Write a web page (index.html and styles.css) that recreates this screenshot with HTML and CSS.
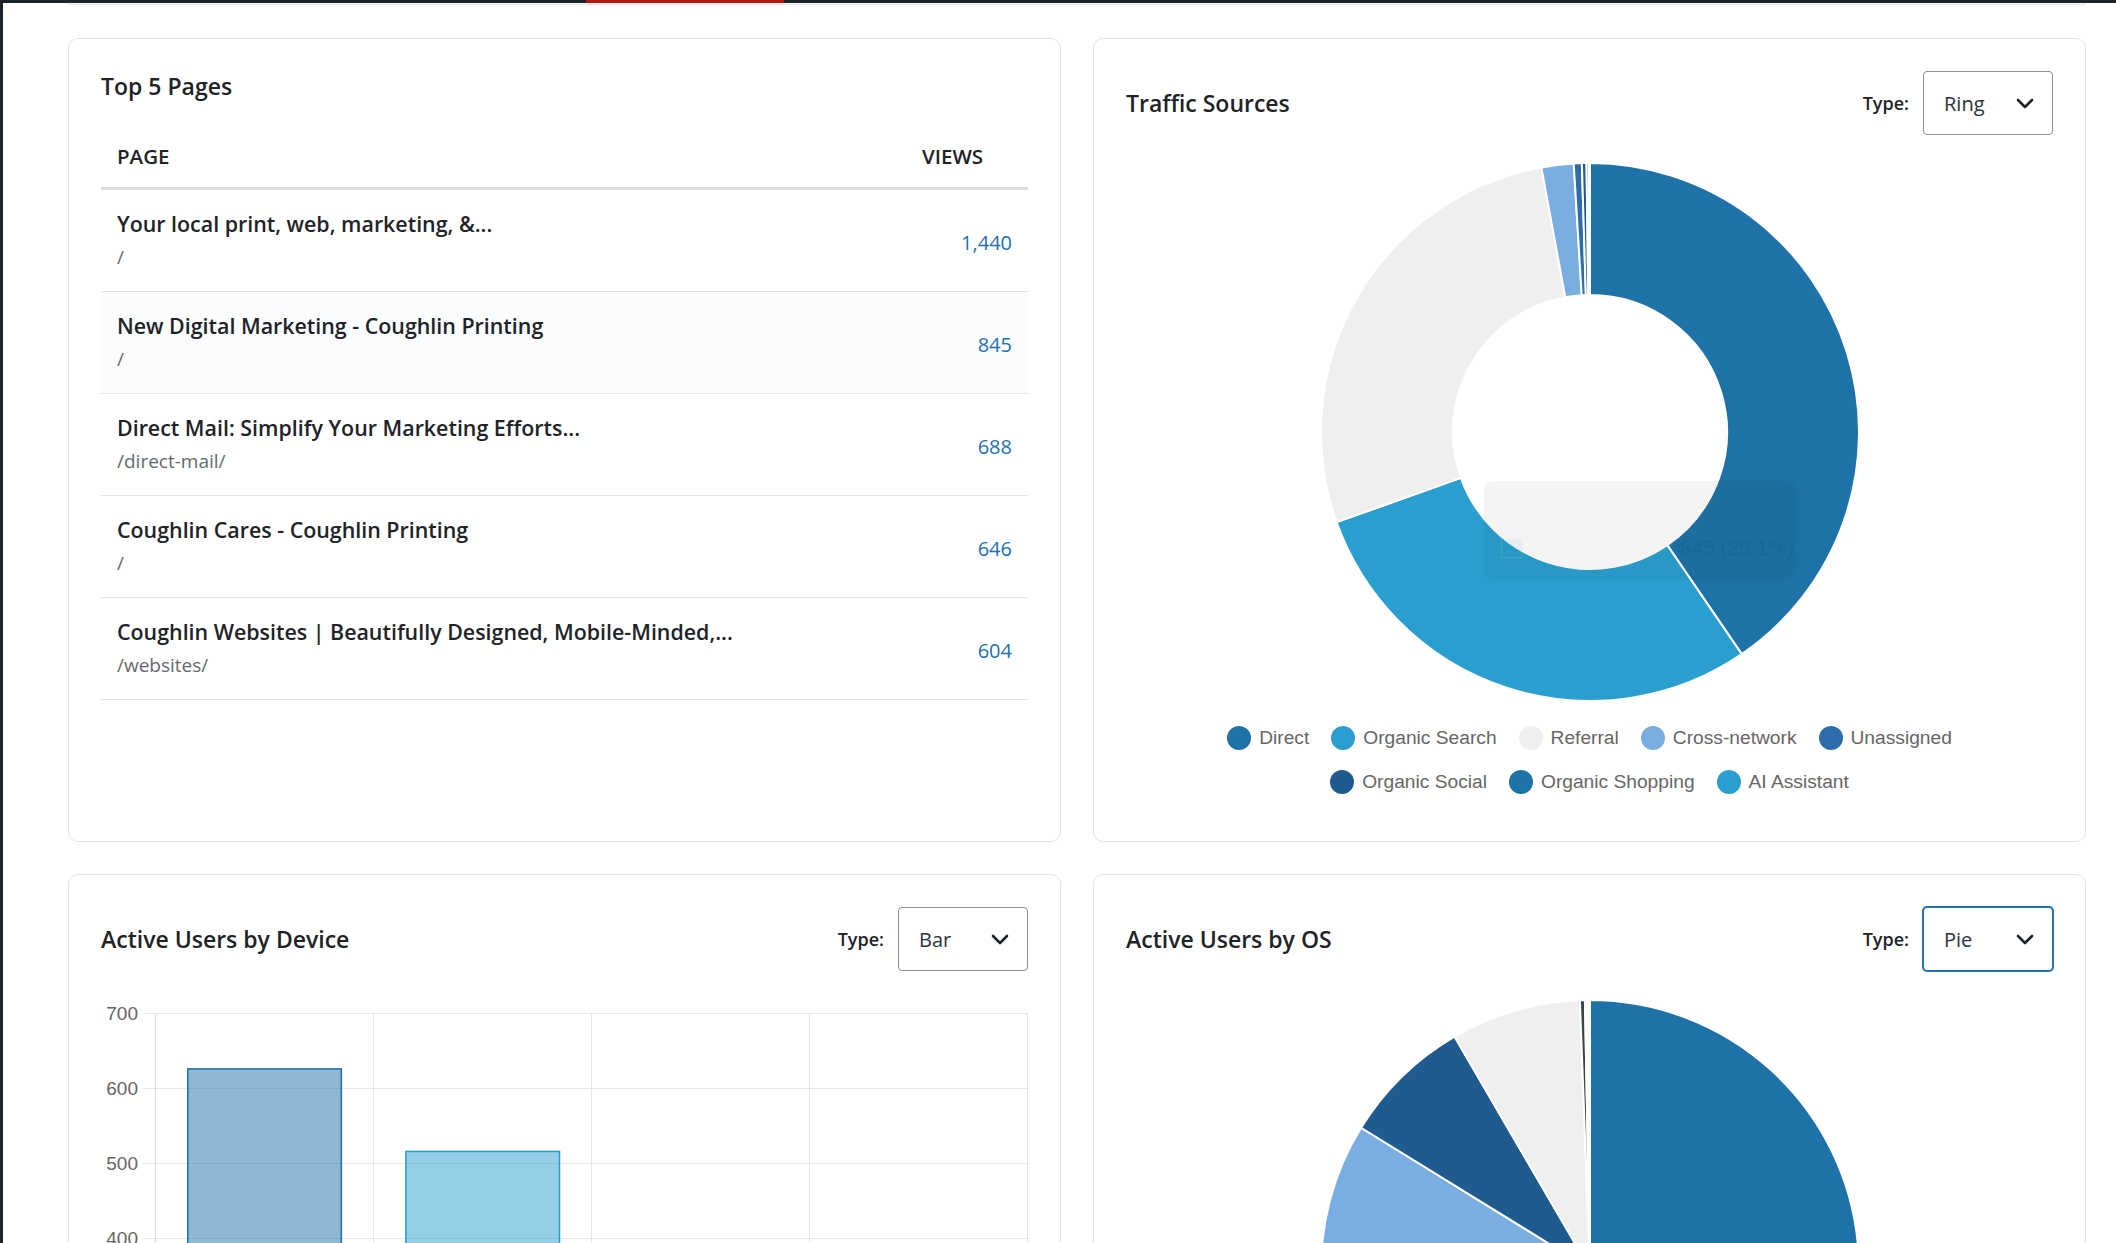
FILE: index.html
```html
<!DOCTYPE html>
<html lang="en">
<head>
<meta charset="utf-8">
<title>Site Analytics</title>
<link rel="stylesheet" href="styles.css">
</head>
<body>
<div class="adminbar"><span class="adminbar-current"></span></div>

<main class="content">
  <div class="panel-tail"></div>

  <div class="dash-grid">
    <!-- Top pages table -->
    <section class="card">
      <h3 class="card-title">Top 5 Pages</h3>
      <table class="pages">
        <thead>
          <tr><th>Page</th><th class="col-views">Views</th></tr>
        </thead>
        <tbody>
          <tr>
            <td><div class="page-title">Your local print, web, marketing, &amp;...</div><div class="page-path">/</div></td>
            <td class="views">1,440</td>
          </tr>
          <tr class="is-hovered">
            <td><div class="page-title">New Digital Marketing - Coughlin Printing</div><div class="page-path">/</div></td>
            <td class="views">845</td>
          </tr>
          <tr>
            <td><div class="page-title">Direct Mail: Simplify Your Marketing Efforts...</div><div class="page-path">/direct-mail/</div></td>
            <td class="views">688</td>
          </tr>
          <tr>
            <td><div class="page-title">Coughlin Cares - Coughlin Printing</div><div class="page-path">/</div></td>
            <td class="views">646</td>
          </tr>
          <tr>
            <td><div class="page-title">Coughlin Websites | Beautifully Designed, Mobile-Minded,...</div><div class="page-path">/websites/</div></td>
            <td class="views">604</td>
          </tr>
        </tbody>
      </table>
    </section>

    <!-- Traffic sources ring chart -->
    <section class="card">
      <header class="card-head">
        <h3 class="card-title">Traffic Sources</h3>
        <div class="type-picker">
          <span class="type-label">Type:</span>
          <div class="select">
            <span>Ring</span>
            <svg class="chevron" width="18" height="11" viewBox="0 0 18 11"><polyline points="2,2 9,9 16,2" fill="none" stroke="#1d2327" stroke-width="2.6" stroke-linecap="round" stroke-linejoin="round"/></svg>
          </div>
        </div>
      </header>
      <div class="chart">
        <svg id="traffic-chart" class="chart-svg" width="927" height="575" viewBox="0 0 927 575"></svg>
        <div class="chart-tooltip">
          <span class="tip-swatch"></span><span class="tip-label">Organic Search: </span><span class="tip-value">845 (29.1%)</span>
        </div>
        <ul id="traffic-legend" class="legend"></ul>
      </div>
    </section>

    <!-- Active users by device bar chart -->
    <section class="card">
      <header class="card-head">
        <h3 class="card-title">Active Users by Device</h3>
        <div class="type-picker">
          <span class="type-label">Type:</span>
          <div class="select">
            <span>Bar</span>
            <svg class="chevron" width="18" height="11" viewBox="0 0 18 11"><polyline points="2,2 9,9 16,2" fill="none" stroke="#1d2327" stroke-width="2.6" stroke-linecap="round" stroke-linejoin="round"/></svg>
          </div>
        </div>
      </header>
      <div class="chart">
        <svg id="device-chart" class="chart-svg" width="927" height="640" viewBox="0 0 927 640"></svg>
      </div>
    </section>

    <!-- Active users by OS pie chart -->
    <section class="card">
      <header class="card-head">
        <h3 class="card-title">Active Users by OS</h3>
        <div class="type-picker">
          <span class="type-label">Type:</span>
          <div class="select is-focused">
            <span>Pie</span>
            <svg class="chevron" width="18" height="11" viewBox="0 0 18 11"><polyline points="2,2 9,9 16,2" fill="none" stroke="#1d2327" stroke-width="2.6" stroke-linecap="round" stroke-linejoin="round"/></svg>
          </div>
        </div>
      </header>
      <div class="chart">
        <svg id="os-chart" class="chart-svg" width="927" height="575" viewBox="0 0 927 575"></svg>
        <ul id="os-legend" class="legend"></ul>
      </div>
    </section>
  </div>
</main>

<script src="app.js"></script>
</body>
</html>
```
FILE: styles.css
```css
* {
  box-sizing: border-box;
}

html,
body {
  height: 100%;
  overflow: hidden;
}

body {
  margin: 0;
  background: #fff;
  border-left: 3px solid #1d2327;
  font-family: "Open Sans", "Noto Sans", sans-serif;
  color: #1d2327;
}

/* thin admin toolbar along the top */
.adminbar {
  display: flex;
  height: 3px;
  background: #1d2327;
}

.adminbar-current {
  width: 198px;
  margin-left: 583px;
  background: #b1190f;
}

.content {
  padding: 0 30px 0 65px;
}

/* bottom edge of the panel above, scrolled out of view */
.panel-tail {
  height: 2px;
  border: 1px solid #e0e2e5;
  border-top: 0;
  border-radius: 0 0 10px 10px;
}

.dash-grid {
  display: grid;
  grid-template-columns: 1fr 1fr;
  gap: 32px;
  margin-top: 33px;
}

.card {
  min-width: 0;
  padding: 32px;
  background: #fff;
  border: 1px solid #e2e4e7;
  border-radius: 10px;
}

.card-title {
  margin: 0;
  font-size: 23px;
  line-height: 31px;
  font-weight: 600;
  color: #1d2327;
}

.card-head {
  display: flex;
  align-items: center;
  justify-content: space-between;
  height: 64px;
}

.type-picker {
  display: flex;
  align-items: center;
  gap: 14px;
}

.type-label {
  font-size: 18px;
  font-weight: 600;
  color: #1d2327;
}

.select {
  display: flex;
  align-items: center;
  justify-content: space-between;
  width: 130px;
  height: 64px;
  padding: 0 18px 0 20px;
  background: #fff;
  border: 1px solid #8c8f94;
  border-radius: 4px;
  font-size: 20px;
  color: #2c3338;
}

.select.is-focused {
  border-color: #2271b1;
  box-shadow: 0 0 0 1px #2271b1;
}

.chevron {
  display: block;
}

/* top pages table */
.pages {
  width: 100%;
  margin-top: 23px;
  border-collapse: collapse;
}

.pages th {
  padding: 16px;
  text-align: left;
  font-size: 20.5px;
  line-height: 30px;
  font-weight: 600;
  text-transform: uppercase;
  color: #1d2327;
  border-bottom: 3px solid #dcdcde;
}

.pages th.col-views {
  width: 122px;
}

.pages td {
  padding: 18px 16px 22px;
  vertical-align: middle;
  border-bottom: 1px solid #e3e4e6;
}

.pages tr.is-hovered td {
  background: #fbfcfe;
}

.page-title {
  font-size: 21.4px;
  line-height: 31px;
  font-weight: 600;
  color: #1d2327;
}

.page-path {
  margin-top: 6px;
  font-size: 19px;
  line-height: 24px;
  color: #646970;
}

.pages td.views {
  padding-top: 22px;
  padding-bottom: 19px;
  text-align: right;
  font-size: 20px;
  color: #2271b1;
}

/* charts */
.chart {
  position: relative;
}

.chart-svg {
  display: block;
}

.chart-svg text {
  font-family: "Liberation Sans", Arial, sans-serif;
  font-size: 19px;
  fill: #666;
}

.legend {
  display: flex;
  flex-wrap: wrap;
  justify-content: center;
  column-gap: 22px;
  max-width: 780px;
  margin: 6px auto 0;
  padding: 0 0 5px;
  list-style: none;
  font-family: "Liberation Sans", Arial, sans-serif;
  font-size: 19.2px;
  color: #666;
}

.legend li {
  display: flex;
  align-items: center;
  gap: 8px;
  height: 44px;
}

.legend .swatch {
  width: 24px;
  height: 24px;
  border-radius: 50%;
}

/* hover tooltip, fading out */
.chart-tooltip {
  position: absolute;
  left: 358px;
  top: 346px;
  display: flex;
  align-items: center;
  width: 312px;
  height: 99px;
  padding: 34px 0 0 17px;
  background: rgba(0, 0, 0, 0.045);
  border-radius: 8px;
  font-family: "Liberation Sans", Arial, sans-serif;
  font-size: 21px;
  white-space: nowrap;
}

.tip-swatch {
  width: 21px;
  height: 20px;
  margin-right: 6px;
  background: rgba(42, 159, 207, 0.06);
  border: 1px solid rgba(255, 255, 255, 0.12);
}

.tip-label {
  color: rgba(255, 255, 255, 0.05);
}

.tip-value {
  color: rgba(0, 0, 0, 0.08);
}
```
FILE: app.js
```js
const SVGNS = "http://www.w3.org/2000/svg";

const trafficSources = [
  { label: "Direct", value: 1175, color: "#1e72a8" },
  { label: "Organic Search", value: 845, color: "#2a9fcf" },
  { label: "Referral", value: 800, color: "#efefef" },
  { label: "Cross-network", value: 56, color: "#7aade2" },
  { label: "Unassigned", value: 14, color: "#2e6dab" },
  { label: "Organic Social", value: 8, color: "#1f5b8f" },
  { label: "Organic Shopping", value: 4, color: "#1e72a8" },
  { label: "AI Assistant", value: 2, color: "#2a9fcf" }
];

const deviceUsers = [
  { label: "desktop", value: 627, color: "#1e72a8" },
  { label: "mobile", value: 517, color: "#2a9fcf" },
  { label: "tablet", value: 19, color: "#7aade2" },
  { label: "smart tv", value: 1, color: "#1f5b8f" }
];

const osUsers = [
  { label: "Windows", value: 472, color: "#1e72a8" },
  { label: "iOS", value: 172, color: "#2a9fcf" },
  { label: "Android", value: 194, color: "#7aade2" },
  { label: "Macintosh", value: 78, color: "#1f5b8f" },
  { label: "Linux", value: 78, color: "#efefef" },
  { label: "Chrome OS", value: 3, color: "#3c434a" },
  { label: "(not set)", value: 3, color: "#ffffff" }
];

function el(tag, attrs, text) {
  const node = document.createElementNS(SVGNS, tag);
  Object.keys(attrs).forEach(k => node.setAttribute(k, attrs[k]));
  if (text !== undefined) node.textContent = text;
  return node;
}

// point on a circle, angle in degrees clockwise from 12 o'clock
function polar(cx, cy, r, deg) {
  const a = deg * Math.PI / 180;
  return [cx + r * Math.sin(a), cy - r * Math.cos(a)];
}

function slicePath(cx, cy, inner, outer, a0, a1) {
  const large = a1 - a0 > 180 ? 1 : 0;
  const [x1, y1] = polar(cx, cy, outer, a0);
  const [x2, y2] = polar(cx, cy, outer, a1);
  if (inner === 0) {
    return `M${cx} ${cy}L${x1} ${y1}A${outer} ${outer} 0 ${large} 1 ${x2} ${y2}Z`;
  }
  const [x3, y3] = polar(cx, cy, inner, a1);
  const [x4, y4] = polar(cx, cy, inner, a0);
  return `M${x1} ${y1}A${outer} ${outer} 0 ${large} 1 ${x2} ${y2}L${x3} ${y3}A${inner} ${inner} 0 ${large} 0 ${x4} ${y4}Z`;
}

function drawRound(svg, data, opts) {
  const total = data.reduce((s, d) => s + d.value, 0);
  let angle = 0;
  data.forEach(d => {
    const span = d.value / total * 360;
    svg.appendChild(el("path", {
      d: slicePath(opts.cx, opts.cy, opts.inner, opts.outer, angle, angle + span),
      fill: d.color,
      stroke: "#fff",
      "stroke-width": 2,
      "stroke-linejoin": "bevel"
    }));
    angle += span;
  });
}

function drawLegend(list, data) {
  data.forEach(d => {
    const li = document.createElement("li");
    const dot = document.createElement("span");
    dot.className = "swatch";
    dot.style.background = d.color;
    li.appendChild(dot);
    li.appendChild(document.createTextNode(d.label));
    list.appendChild(li);
  });
}

function crisp(v) {
  return Math.round(v - 0.5) + 0.5;
}

function drawBars(svg, data) {
  const left = 54.5, right = 927, top = 42.5, max = 700, unit = 0.75;
  const base = top + max * unit;
  const slot = (right - left) / data.length;

  for (let v = 0; v <= max; v += 100) {
    const y = top + (max - v) * unit;
    svg.appendChild(el("line", { x1: 42, y1: y, x2: right, y2: y, stroke: "#e6e6e6", "stroke-width": 1 }));
    svg.appendChild(el("text", { x: 37, y: y, dy: "0.35em", "text-anchor": "end" }, String(v)));
  }
  for (let k = 0; k <= data.length; k++) {
    const x = k === data.length ? right - 0.5 : crisp(left + k * slot);
    svg.appendChild(el("line", {
      x1: x, y1: top, x2: x, y2: base + 10,
      stroke: k === 0 ? "#dcdcdc" : "#e6e6e6", "stroke-width": 1
    }));
  }
  data.forEach((d, k) => {
    const cx = left + (k + 0.5) * slot;
    const w = 155;
    const x = cx - w / 2;
    const y = top + (max - d.value) * unit;
    svg.appendChild(el("rect", { x: x, y: y, width: w, height: base - y, fill: d.color, "fill-opacity": 0.5 }));
    svg.appendChild(el("path", {
      d: `M${x + 0.75} ${base}V${y + 0.75}H${x + w - 0.75}V${base}`,
      fill: "none", stroke: d.color, "stroke-width": 1.5
    }));
    svg.appendChild(el("text", { x: cx, y: base + 34, "text-anchor": "middle" }, d.label));
  });
}

drawRound(document.getElementById("traffic-chart"), trafficSources, { cx: 464, cy: 297, inner: 137, outer: 269 });
drawLegend(document.getElementById("traffic-legend"), trafficSources);

drawBars(document.getElementById("device-chart"), deviceUsers);

drawRound(document.getElementById("os-chart"), osUsers, { cx: 464, cy: 298, inner: 0, outer: 269 });
drawLegend(document.getElementById("os-legend"), osUsers);
```
